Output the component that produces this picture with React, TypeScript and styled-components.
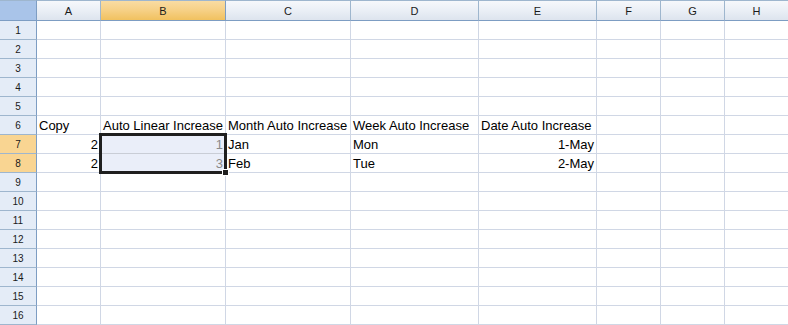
import styled, { createGlobalStyle } from 'styled-components';

const GlobalStyle = createGlobalStyle`
  html, body {
    margin: 0;
    padding: 0;
    background: #ffffff;
  }
`;

type Column = {
  key: string;
  width: number;
};

type CellValue = {
  text: string;
  align?: 'left' | 'right';
};

const COLUMNS: Column[] = [
  { key: 'A', width: 64 },
  { key: 'B', width: 125 },
  { key: 'C', width: 125 },
  { key: 'D', width: 128 },
  { key: 'E', width: 118 },
  { key: 'F', width: 64 },
  { key: 'G', width: 64 },
  { key: 'H', width: 64 },
];

const ROW_COUNT = 16;
const SELECTED_COLUMN = 'B';
const SELECTED_ROWS = [7, 8];

const DATA: Record<number, Record<string, CellValue>> = {
  6: {
    A: { text: 'Copy' },
    B: { text: 'Auto Linear Increase' },
    C: { text: 'Month Auto Increase' },
    D: { text: 'Week Auto Increase' },
    E: { text: 'Date Auto Increase' },
  },
  7: {
    A: { text: '2', align: 'right' },
    B: { text: '1', align: 'right' },
    C: { text: 'Jan' },
    D: { text: 'Mon' },
    E: { text: '1-May', align: 'right' },
  },
  8: {
    A: { text: '2', align: 'right' },
    B: { text: '3', align: 'right' },
    C: { text: 'Feb' },
    D: { text: 'Tue' },
    E: { text: '2-May', align: 'right' },
  },
};

const Sheet = styled.div`
  position: relative;
  width: 788px;
  height: 325px;
  overflow: hidden;
  display: grid;
  grid-template-columns: 37px ${COLUMNS.map((c) => `${c.width}px`).join(' ')};
  grid-template-rows: 21px repeat(${ROW_COUNT}, 19px);
  font-family: 'Liberation Sans', Arial, sans-serif;
`;

const Corner = styled.div`
  box-sizing: border-box;
  border-top: 1px solid #9eb6ce;
  border-right: 1px solid #7d9dc3;
  border-bottom: 1px solid #7d9dc3;
  background: #a9c4e9;
`;

const ColumnHeader = styled.div<{ $selected?: boolean }>`
  box-sizing: border-box;
  display: flex;
  align-items: center;
  justify-content: center;
  border-top: 1px solid #9eb6ce;
  border-right: 1px solid ${(p) => (p.$selected ? '#7d9dc3' : '#9eb6ce')};
  border-bottom: 1px solid #7d9dc3;
  background: ${(p) =>
    p.$selected
      ? 'linear-gradient(to bottom, #f9dca3 0%, #f6d085 50%, #f1c15f 100%)'
      : 'linear-gradient(to bottom, #f6f8fb 0%, #eaeff6 50%, #dde4ee 100%)'};
  font-size: 11px;
  color: #1a1a1a;
`;

const RowHeader = styled.div<{ $selected?: boolean }>`
  box-sizing: border-box;
  display: flex;
  align-items: center;
  justify-content: center;
  border-right: 1px solid #7d9dc3;
  border-bottom: 1px solid #9eb6ce;
  background: ${(p) => (p.$selected ? '#f9d592' : '#e4ecf7')};
  font-size: 10px;
  color: #1a1a1a;
`;

const Cell = styled.div<{ $align?: 'left' | 'right'; $selected?: boolean }>`
  box-sizing: border-box;
  border-right: 1px solid #d0d7e5;
  border-bottom: 1px solid ${(p) => (p.$selected ? '#c9cdd6' : '#d0d7e5')};
  background: ${(p) => (p.$selected ? '#eaeef9' : '#ffffff')};
  padding: 0 2px;
  overflow: hidden;
  white-space: nowrap;
  text-align: ${(p) => p.$align ?? 'left'};
  font-size: 13px;
  line-height: 19px;
  color: ${(p) => (p.$selected ? '#8a8a8a' : '#000000')};
`;

const SelectionFrame = styled.div`
  position: absolute;
  left: 99px;
  top: 133px;
  width: 128px;
  height: 41px;
  box-sizing: border-box;
  border: 3px solid #1f1f1f;
  pointer-events: none;
`;

const FillHandle = styled.div`
  position: absolute;
  right: -5px;
  bottom: -5px;
  width: 5px;
  height: 5px;
  background: #1f1f1f;
  border: 1px solid #ffffff;
`;

const App = () => {
  const rows = Array.from({ length: ROW_COUNT }, (_, i) => i + 1);

  return (
    <>
      <GlobalStyle />
      <Sheet>
        <Corner />
        {COLUMNS.map((col) => (
          <ColumnHeader key={col.key} $selected={col.key === SELECTED_COLUMN}>
            {col.key}
          </ColumnHeader>
        ))}
        {rows.map((row) => {
          const rowSelected = SELECTED_ROWS.includes(row);
          return [
            <RowHeader key={`h${row}`} $selected={rowSelected}>
              {row}
            </RowHeader>,
            ...COLUMNS.map((col) => {
              const value = DATA[row]?.[col.key];
              return (
                <Cell
                  key={`${col.key}${row}`}
                  $align={value?.align}
                  $selected={rowSelected && col.key === SELECTED_COLUMN}
                >
                  {value?.text}
                </Cell>
              );
            }),
          ];
        })}
        <SelectionFrame>
          <FillHandle />
        </SelectionFrame>
      </Sheet>
    </>
  );
};

export default App;
